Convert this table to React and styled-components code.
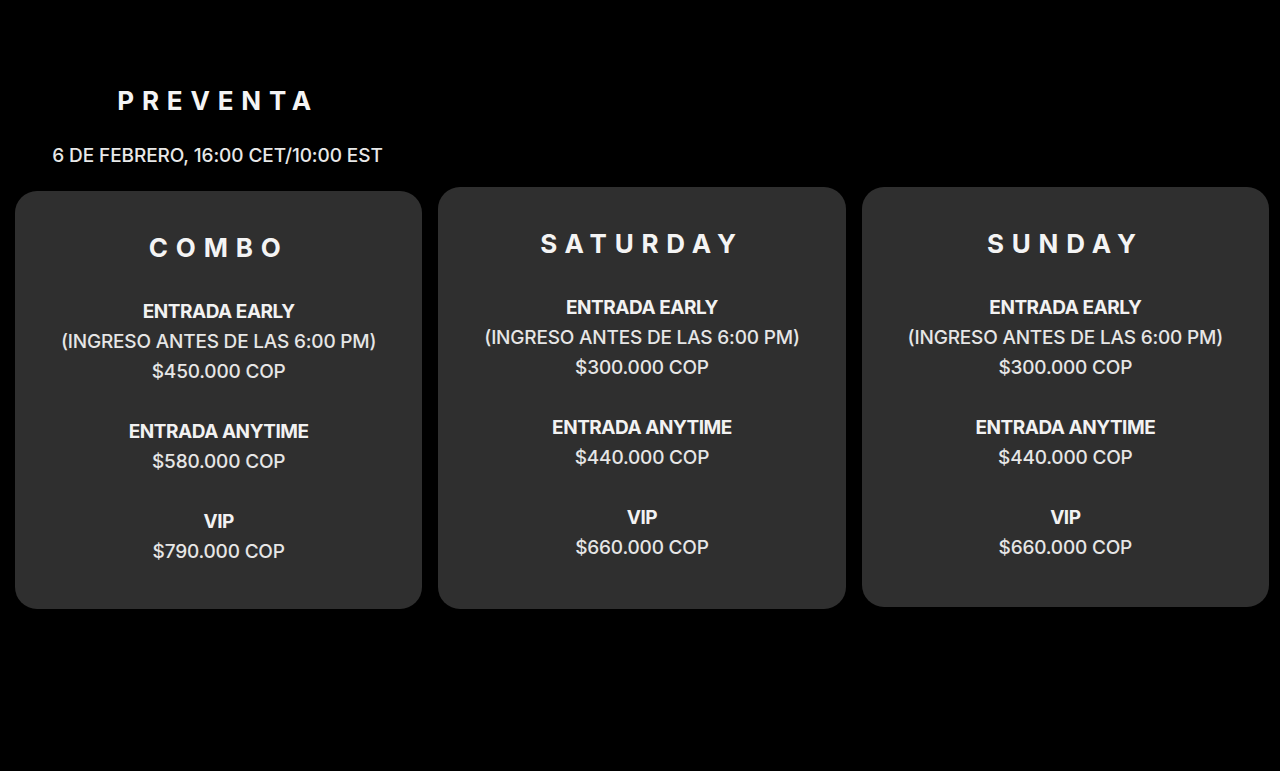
import React from 'react';
import styled, { createGlobalStyle } from 'styled-components';

const GlobalStyle = createGlobalStyle`
  html, body {
    margin: 0;
    padding: 0;
    background: #000;
  }
  body {
    font-family: Inter, Roboto, "Liberation Sans", Arial, sans-serif;
    color: #fff;
  }
`;

const tickets = [
  {
    id: 'combo',
    title: 'COMBO',
    offset: 4,
    height: 418,
    items: [
      { name: 'ENTRADA EARLY', note: '(INGRESO ANTES DE LAS 6:00 PM)', price: '$450.000 COP' },
      { name: 'ENTRADA ANYTIME', price: '$580.000 COP' },
      { name: 'VIP', price: '$790.000 COP' },
    ],
  },
  {
    id: 'saturday',
    title: 'SATURDAY',
    offset: 0,
    height: 422,
    items: [
      { name: 'ENTRADA EARLY', note: '(INGRESO ANTES DE LAS 6:00 PM)', price: '$300.000 COP' },
      { name: 'ENTRADA ANYTIME', price: '$440.000 COP' },
      { name: 'VIP', price: '$660.000 COP' },
    ],
  },
  {
    id: 'sunday',
    title: 'SUNDAY',
    offset: 0,
    height: 420,
    items: [
      { name: 'ENTRADA EARLY', note: '(INGRESO ANTES DE LAS 6:00 PM)', price: '$300.000 COP' },
      { name: 'ENTRADA ANYTIME', price: '$440.000 COP' },
      { name: 'VIP', price: '$660.000 COP' },
    ],
  },
];

const App = () => {
  return (
    <>
      <GlobalStyle />
      <Page>
        <Header>
          <Heading>PREVENTA</Heading>
          <DateLine>6 DE FEBRERO, 16:00 CET/10:00 EST</DateLine>
        </Header>

        <CardGrid>
          {tickets.map((ticket) => (
            <Card key={ticket.id} $offset={ticket.offset} $height={ticket.height}>
              <CardTitle>{ticket.title}</CardTitle>
              <TierList>
                {ticket.items.map((item) => (
                  <Tier key={item.name}>
                    <TierName>{item.name}</TierName>
                    {item.note && <TierLine>{item.note}</TierLine>}
                    <TierLine>{item.price}</TierLine>
                  </Tier>
                ))}
              </TierList>
            </Card>
          ))}
        </CardGrid>
      </Page>
    </>
  );
};

const Page = styled.div`
  width: 1280px;
  min-height: 771px;
  box-sizing: border-box;
  padding: 86px 11px 0 15px;
  background: #000;
`;

const Header = styled.div`
  width: 405px;
  display: flex;
  flex-direction: column;
  align-items: center;
  text-align: center;
`;

const Heading = styled.h1`
  margin: 0;
  font-size: 26px;
  line-height: 30px;
  font-weight: 700;
  letter-spacing: 0.3em;
  padding-left: 0.05em;
  color: #f4f4f4;
`;

const DateLine = styled.div`
  margin-top: 29px;
  font-size: 19px;
  line-height: 22px;
  font-weight: 500;
  letter-spacing: -0.005em;
  color: #e8e8e8;
`;

const CardGrid = styled.div`
  margin-top: 20px;
  display: grid;
  grid-template-columns: repeat(3, 1fr);
  gap: 16px;
  align-items: start;
`;

const Card = styled.div`
  margin-top: ${(p) => p.$offset}px;
  height: ${(p) => p.$height}px;
  box-sizing: border-box;
  padding: 40px 12px 0;
  background: #2f2f2f;
  border-radius: 22px;
  display: flex;
  flex-direction: column;
  align-items: center;
  text-align: center;
`;

const CardTitle = styled.h2`
  margin: 0;
  font-size: 26px;
  line-height: 34px;
  font-weight: 700;
  letter-spacing: 0.3em;
  color: #f4f4f4;
`;

const TierList = styled.div`
  margin-top: 32px;
  display: flex;
  flex-direction: column;
  gap: 30px;
`;

const Tier = styled.div`
  display: flex;
  flex-direction: column;
`;

const TierName = styled.div`
  font-size: 19px;
  line-height: 30px;
  font-weight: 700;
  letter-spacing: -0.025em;
  color: #f2f2f2;
`;

const TierLine = styled.div`
  font-size: 19px;
  line-height: 30px;
  font-weight: 500;
  letter-spacing: -0.01em;
  color: #e6e6e6;
`;

export default App;
